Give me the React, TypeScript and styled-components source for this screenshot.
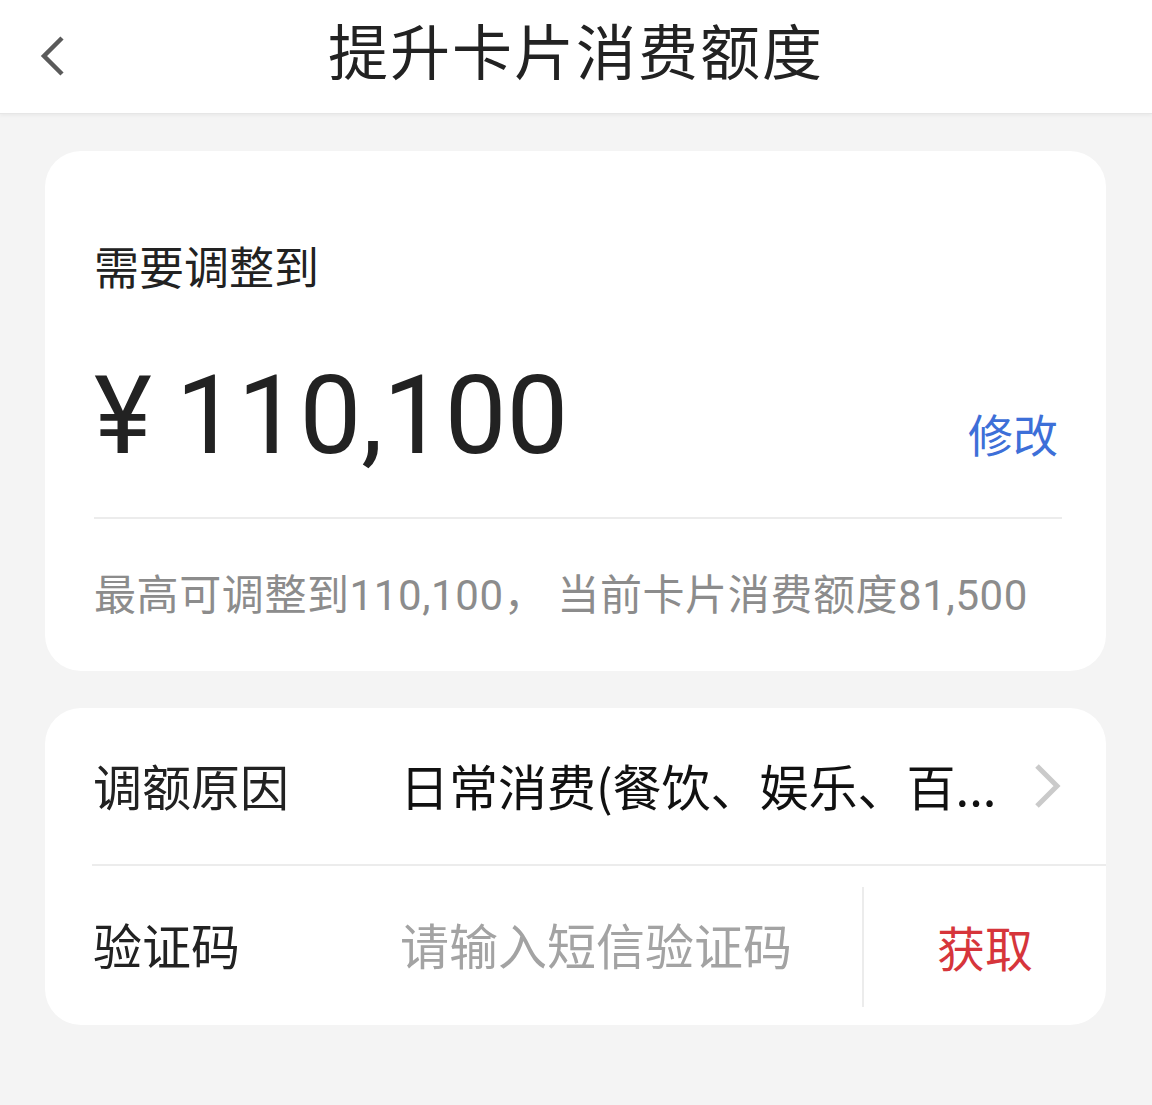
import React from "react";
import styled, { createGlobalStyle } from "styled-components";

const Global = createGlobalStyle`
  html, body { margin: 0; padding: 0; background: #f4f4f4; }
  body { font-family: Roboto, "Noto Sans CJK SC", sans-serif; color: #222; }
  * { box-sizing: border-box; }
`;

const Page = styled.div`
  width: 1152px;
  min-height: 1105px;
  background: #f4f4f4;
`;

const Header = styled.header`
  height: 114px;
  background: #fff;
  border-bottom: 1px solid #e6e6e6;
  box-shadow: 0 2px 3px rgba(0, 0, 0, 0.04);
  display: grid;
  grid-template-columns: 114px 1fr 114px;
  align-items: center;
`;

const Back = styled.button`
  border: 0;
  background: transparent;
  padding: 0 0 0 38px;
  height: 100%;
  display: flex;
  align-items: center;
  cursor: pointer;
`;

const Title = styled.h1`
  margin: 0;
  text-align: center;
  font-family: "Noto Sans CJK SC", sans-serif;
  font-weight: 400;
  font-size: 60px;
  letter-spacing: 2px;
  line-height: 1;
  color: #222;
  padding-bottom: 16px;
`;

const Body = styled.main`
  padding: 37px 46px 0 45px;
  display: flex;
  flex-direction: column;
  gap: 37px;
`;

const Card = styled.section`
  background: #fff;
  border-radius: 36px;
`;

const AmountCard = styled(Card)`
  padding: 92px 44px 52px 49px;
`;

const Label = styled.div`
  font-family: "Noto Sans CJK SC", sans-serif;
  font-size: 45px;
  line-height: 46px;
  color: #222;
`;

const AmountRow = styled.div`
  margin-top: 72px;
  display: flex;
  align-items: flex-end;
  justify-content: space-between;
  padding-bottom: 46px;
  border-bottom: 2px solid #ececec;
`;

const Amount = styled.div`
  font-family: Roboto, sans-serif;
  font-size: 110px;
  line-height: 110px;
  color: #222;
`;

const Yen = styled.span`
  margin-right: 24px;
`;

const EditLink = styled.a`
  font-family: "Noto Sans CJK SC", sans-serif;
  font-size: 45px;
  line-height: 46px;
  color: #3d6fd8;
  margin-bottom: 14px;
  margin-right: 4px;
  cursor: pointer;
`;

const Hint = styled.div`
  margin-top: 54px;
  font-family: Roboto, "Noto Sans CJK SC", sans-serif;
  font-size: 42px;
  line-height: 46px;
  letter-spacing: 0.6px;
  color: #8c8c8c;
`;

const FormCard = styled(Card)`
  padding-left: 47px;
`;

const Row = styled.div<{ $divider?: boolean }>`
  height: 158px;
  display: flex;
  align-items: center;
  padding-bottom: 4px;
  border-bottom: ${(p) => (p.$divider ? "2px solid #ececec" : "none")};
  &:last-child { height: 159px; }
`;

const RowLabel = styled.div`
  width: 308px;
  padding-left: 1px;
  flex-shrink: 0;
  font-family: "Noto Sans CJK SC", sans-serif;
  font-size: 49px;
  color: #222;
`;

const RowValue = styled.div`
  flex: 1;
  font-family: "Noto Sans CJK SC", sans-serif;
  font-size: 49px;
  color: #111;
  white-space: nowrap;
  overflow: hidden;
`;

const Chevron = styled.div`
  display: flex;
  align-items: center;
  margin-right: 44px;
  padding-top: 4px;
`;

const Input = styled.input`
  flex: 1;
  min-width: 0;
  border: 0;
  outline: none;
  font-family: "Noto Sans CJK SC", sans-serif;
  font-size: 49px;
  color: #222;
  padding: 0;
  background: transparent;
  &::placeholder { color: #a3a3a3; }
`;

const CodeButton = styled.button`
  width: 244px;
  align-self: stretch;
  margin: 21px 0 14px;
  border: 0;
  border-left: 2px solid #ececec;
  background: transparent;
  font-family: "Noto Sans CJK SC", sans-serif;
  font-size: 48px;
  color: #d6353b;
  cursor: pointer;
  padding: 0 0 2px;
`;

export default function App() {
  return (
    <Page>
      <Global />
      <Header>
        <Back aria-label="返回">
          <svg width="30" height="44" viewBox="0 0 30 44">
            <path d="M24 3 L6 21 L24 39" fill="none" stroke="#5a5a5a" strokeWidth="4.5" />
          </svg>
        </Back>
        <Title>提升卡片消费额度</Title>
        <div />
      </Header>
      <Body>
        <AmountCard>
          <Label>需要调整到</Label>
          <AmountRow>
            <Amount>
              <Yen>¥</Yen>110,100
            </Amount>
            <EditLink>修改</EditLink>
          </AmountRow>
          <Hint>最高可调整到110,100， 当前卡片消费额度81,500</Hint>
        </AmountCard>
        <FormCard>
          <Row $divider>
            <RowLabel>调额原因</RowLabel>
            <RowValue>日常消费(餐饮、娱乐、百...</RowValue>
            <Chevron>
              <svg width="30" height="46" viewBox="0 0 30 46">
                <path d="M5 3 L25 23 L5 43" fill="none" stroke="#cacaca" strokeWidth="5" />
              </svg>
            </Chevron>
          </Row>
          <Row>
            <RowLabel>验证码</RowLabel>
            <Input placeholder="请输入短信验证码" />
            <CodeButton>获取</CodeButton>
          </Row>
        </FormCard>
      </Body>
    </Page>
  );
}
